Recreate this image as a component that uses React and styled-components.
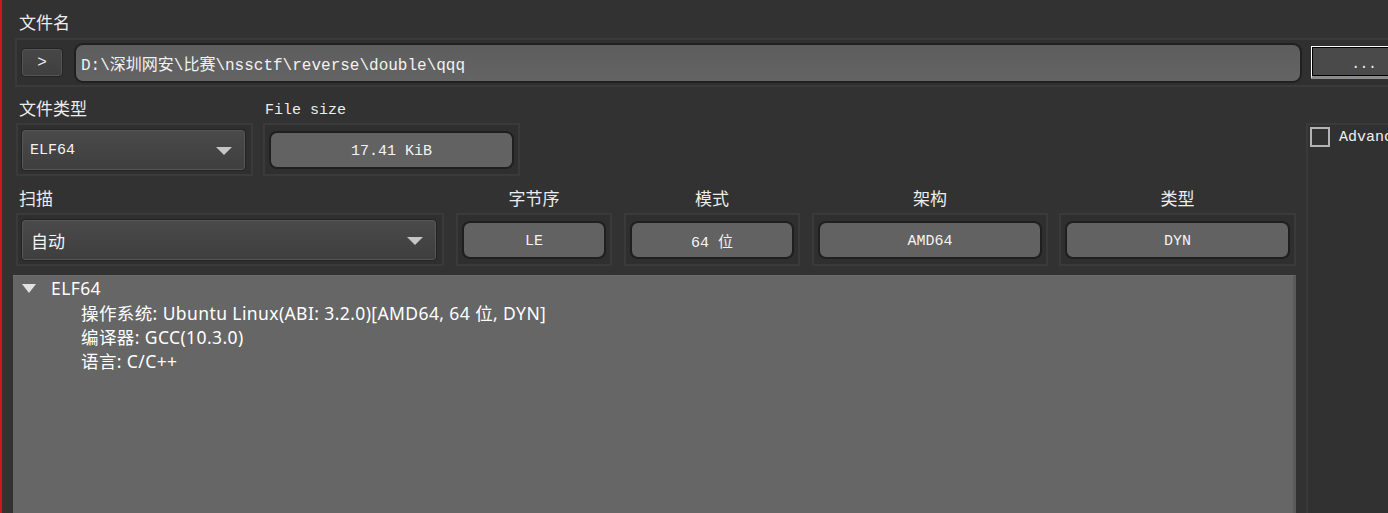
import React from 'react';
import styled, { createGlobalStyle } from 'styled-components';

const GlobalStyle = createGlobalStyle`
  html, body {
    margin: 0;
    padding: 0;
    background: #323232;
  }
  body {
    width: 1388px;
    height: 513px;
    overflow: hidden;
  }
`;

const MONO = `"Liberation Mono", "Noto Sans CJK SC", monospace`;
const SANS = `"Noto Sans", "Noto Sans CJK SC", sans-serif`;

const SWindow = styled.div`
  width: 1388px;
  height: 513px;
  box-sizing: border-box;
  border-left: 2px solid #d3161d;
  background: #323232;
  padding: 11px 0 0 11px;
  display: flex;
  flex-direction: column;
  overflow: hidden;
  font-family: ${MONO};
  color: #ededed;
`;

const SLabel = styled.div`
  height: 19px;
  padding-top: 3px;
  line-height: 22px;
  font-size: ${p => (p.mono ? '15px' : '17px')};
  padding-left: ${p => p.indent || 0}px;
  text-align: ${p => (p.center ? 'center' : 'left')};
  margin-bottom: 4px;
  white-space: nowrap;
`;

const SFileSection = styled.div`
  display: flex;
  flex-direction: column;
`;

const SFileFrame = styled.div`
  width: 1440px;
  height: 49px;
  box-sizing: border-box;
  margin-left: 2px;
  margin-top: 1px;
  border: 2px solid #3a3a3a;
  background: #303030;
  display: flex;
  align-items: center;
  padding: 0 36px 0 4px;
`;

const SArrowButton = styled.div`
  width: 42px;
  height: 29px;
  box-sizing: border-box;
  border: 1px solid #252525;
  border-radius: 4px;
  background: linear-gradient(#474747, #3f3f3f);
  box-shadow: inset 0 0 0 1px #545454;
  display: flex;
  align-items: center;
  justify-content: center;
  font-size: 16px;
  color: #e6f0ff;
`;

const SPathInput = styled.div`
  flex: 1;
  height: 40px;
  margin-left: 11px;
  box-sizing: border-box;
  border: 2px solid #202020;
  border-radius: 9px;
  background: linear-gradient(#5d5d5d, #646464);
  display: flex;
  align-items: center;
  padding: 1px 0 0 5px;
  font-size: 16px;
  color: #f2f2f2;
  white-space: nowrap;
`;

const SBrowseButton = styled.div`
  width: 106px;
  height: 33px;
  margin-left: 9px;
  box-sizing: border-box;
  border: 1px solid #ffffff;
  border-bottom: 3px solid #8c8c8c;
  box-shadow: inset 0 0 0 1px #000;
  background: #4a4a4a;
  display: flex;
  align-items: center;
  justify-content: center;
  padding-top: 4px;
  font-size: 14px;
  color: #f0f0f0;
`;

const SBody = styled.div`
  flex: 1;
  display: flex;
  margin-top: 10px;
  min-height: 0;
`;

const SLeftColumn = styled.div`
  width: 1284px;
  display: flex;
  flex-direction: column;
`;

const SFieldRow = styled.div`
  display: flex;
  padding-left: 3px;
  margin-bottom: ${p => p.spacing || 0}px;
`;

const SGroup = styled.div`
  width: ${p => p.width}px;
  margin-left: ${p => p.gap || 0}px;
  display: flex;
  flex-direction: column;
`;

const SGroupFrame = styled.div`
  height: 53px;
  box-sizing: border-box;
  border: 2px solid #3a3a3a;
  background: #2f2f2f;
  display: flex;
  align-items: center;
  padding: ${p => (p.combo ? '0 5px 0 3px' : '0 4px')};
`;

const SCombo = styled.div`
  flex: 1;
  height: 42px;
  box-sizing: border-box;
  border: 1px solid #232323;
  border-radius: 4px;
  background: linear-gradient(#4a4a4a, #3e3e3e);
  box-shadow: inset 0 0 0 1px #565656;
  display: flex;
  align-items: center;
  justify-content: space-between;
  padding: 2px 13px 0 ${p => p.textIndent || 8}px;
  font-size: ${p => (p.cjk ? '17px' : '15px')};
  color: #f4f4f4;
`;

const SComboArrow = styled.span`
  width: 0;
  height: 0;
  border-left: 8px solid transparent;
  border-right: 8px solid transparent;
  border-top: 8px solid #c6c6c6;
`;

const SValueBox = styled.div`
  flex: 1;
  height: 38px;
  box-sizing: border-box;
  border: 2px solid #1f1f1f;
  border-radius: 8px;
  background: #626262;
  display: flex;
  align-items: center;
  justify-content: center;
  padding-top: 3px;
  font-size: 15px;
  color: #f4f4f4;
  white-space: nowrap;
`;

const STree = styled.div`
  flex: 1;
  margin-top: 9px;
  box-sizing: border-box;
  background: #666666;
  border-top: 1px solid #6c6c6c;
  border-right: 3px solid #5a5a5a;
  font-family: ${SANS};
  font-size: 17.5px;
  letter-spacing: 0.4px;
  color: #ffffff;
`;

const STreeRow = styled.div`
  height: 24px;
  display: flex;
  align-items: center;
  padding-left: ${p => p.indent}px;
  white-space: nowrap;
`;

const STreeToggle = styled.span`
  width: 0;
  height: 0;
  border-left: 7px solid transparent;
  border-right: 7px solid transparent;
  border-top: 9px solid #e2e2e2;
  margin-right: 15px;
  margin-top: 1px;
`;

const SSidePanel = styled.div`
  flex: 1;
  margin-left: 10px;
  display: flex;
  flex-direction: column;
`;

const SSideFrame = styled.div`
  flex: 1;
  box-sizing: border-box;
  border-top: 2px solid #3a3a3a;
  border-left: 2px solid #3a3a3a;
  background: #313131;
  padding: 2px 0 0 2px;
`;

const SCheckRow = styled.label`
  display: flex;
  align-items: center;
  gap: 9px;
  font-size: 15px;
  white-space: nowrap;
  color: #f0f0f0;
`;

const SCheckBox = styled.span`
  width: 20px;
  height: 20px;
  flex-shrink: 0;
  box-sizing: border-box;
  border: 2px solid #b3b3b3;
`;

function App() {
  const smallFields = [
    { label: '字节序', value: 'LE', width: 156, gap: 12 },
    { label: '模式', value: '64 位', width: 176, gap: 12 },
    { label: '架构', value: 'AMD64', width: 236, gap: 12 },
    { label: '类型', value: 'DYN', width: 237, gap: 11 },
  ];

  return (
    <>
      <GlobalStyle />
      <SWindow>
        <SFileSection>
          <SLabel indent={6}>文件名</SLabel>
          <SFileFrame>
            <SArrowButton>&gt;</SArrowButton>
            <SPathInput>D:\深圳网安\比赛\nssctf\reverse\double\qqq</SPathInput>
            <SBrowseButton>...</SBrowseButton>
          </SFileFrame>
        </SFileSection>

        <SBody>
          <SLeftColumn>
            <SFieldRow spacing={11}>
              <SGroup width={237}>
                <SLabel indent={3}>文件类型</SLabel>
                <SGroupFrame combo>
                  <SCombo>
                    ELF64
                    <SComboArrow />
                  </SCombo>
                </SGroupFrame>
              </SGroup>
              <SGroup width={257} gap={10}>
                <SLabel indent={2} mono>
                  File size
                </SLabel>
                <SGroupFrame>
                  <SValueBox>17.41 KiB</SValueBox>
                </SGroupFrame>
              </SGroup>
            </SFieldRow>

            <SFieldRow>
              <SGroup width={428}>
                <SLabel indent={3}>扫描</SLabel>
                <SGroupFrame combo>
                  <SCombo cjk textIndent={9}>
                    自动
                    <SComboArrow />
                  </SCombo>
                </SGroupFrame>
              </SGroup>
              {smallFields.map(f => (
                <SGroup key={f.label} width={f.width} gap={f.gap}>
                  <SLabel center>{f.label}</SLabel>
                  <SGroupFrame>
                    <SValueBox>{f.value}</SValueBox>
                  </SGroupFrame>
                </SGroup>
              ))}
            </SFieldRow>

            <STree>
              <STreeRow indent={9}>
                <STreeToggle />
                ELF64
              </STreeRow>
              <STreeRow indent={68}>操作系统: Ubuntu Linux(ABI: 3.2.0)[AMD64, 64 位, DYN]</STreeRow>
              <STreeRow indent={68}>编译器: GCC(10.3.0)</STreeRow>
              <STreeRow indent={68}>语言: C/C++</STreeRow>
            </STree>
          </SLeftColumn>

          <SSidePanel>
            <SLabel />
            <SSideFrame>
              <SCheckRow>
                <SCheckBox />
                Advanced
              </SCheckRow>
            </SSideFrame>
          </SSidePanel>
        </SBody>
      </SWindow>
    </>
  );
}

export default App;
